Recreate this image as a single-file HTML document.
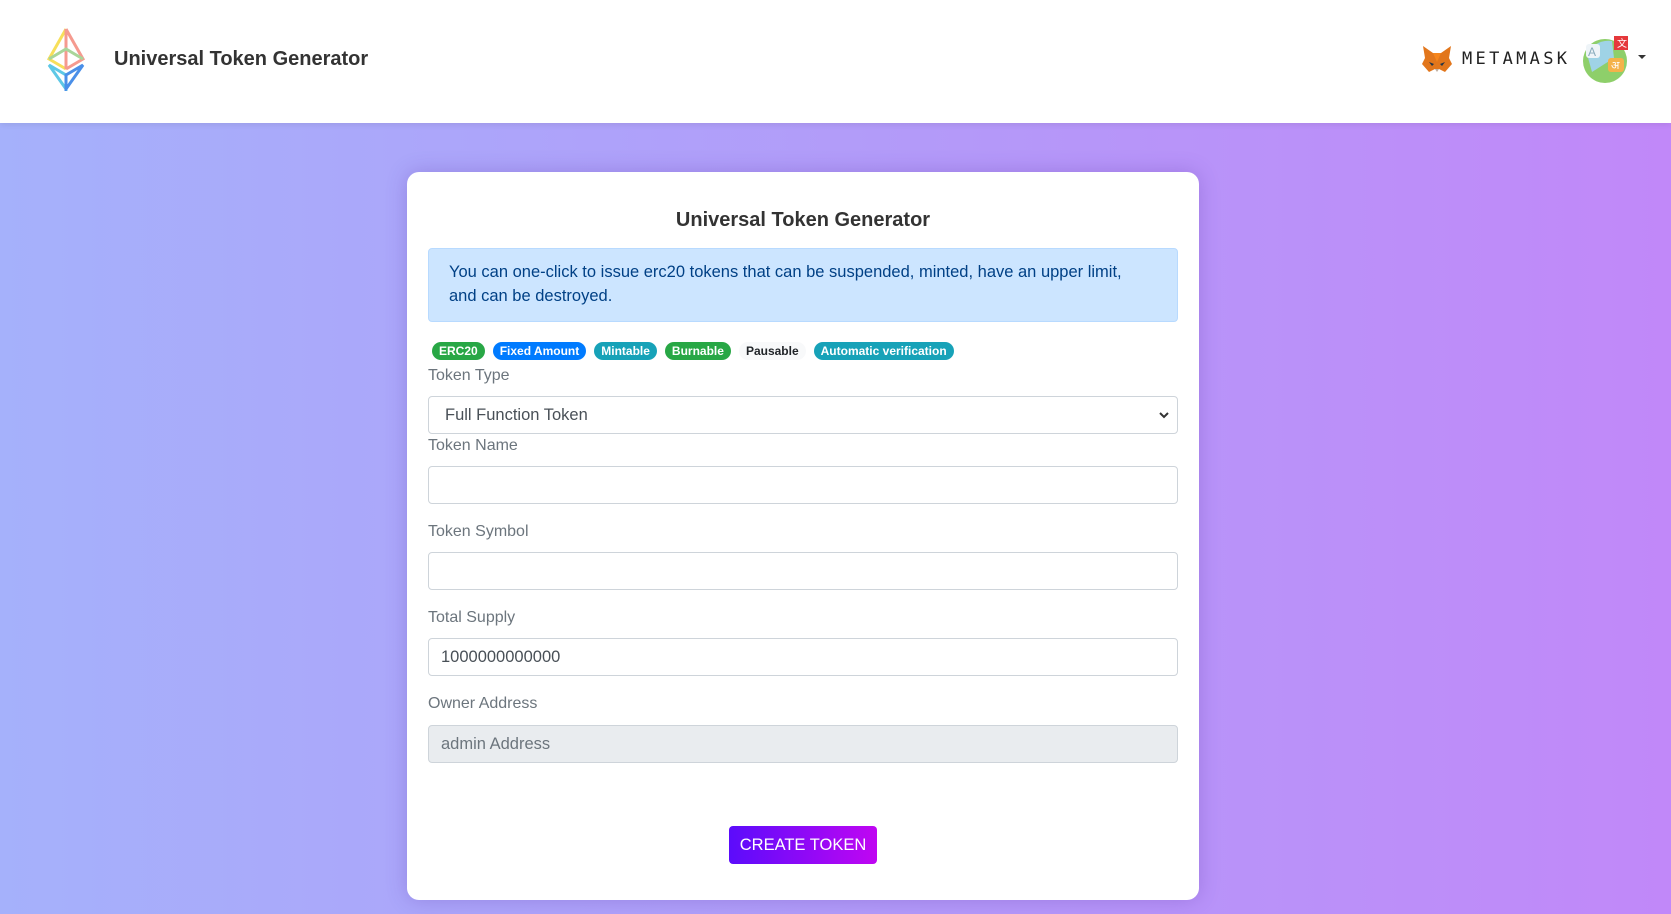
<!DOCTYPE html>
<html><head><meta charset="utf-8"><style>
*{box-sizing:border-box;margin:0;padding:0}
body{width:1671px;height:914px;overflow:hidden;font-family:"Liberation Sans",sans-serif;background:linear-gradient(90deg,#a5b1fb 0%,#b39af9 55%,#c188f9 100%);position:relative;color:#333}
.hdr{position:absolute;left:0;top:0;width:1671px;height:123px;background:#fff;box-shadow:0 2px 6px rgba(0,0,0,.08)}
.logo{position:absolute;left:46px;top:27px}
.title{position:absolute;left:114px;top:48px;font-size:20px;font-weight:bold;color:#333}
.mm{position:absolute;left:1462px;top:49px;font-size:17px;letter-spacing:3.3px;color:#222;font-family:"DejaVu Sans Mono",monospace}
.card{position:absolute;left:407px;top:172px;width:792px;height:728px;background:#fff;border-radius:12px;box-shadow:0 0 20px rgba(80,40,160,.25)}
.ct{position:absolute;left:0;width:100%;top:37px;text-align:center;font-size:20px;font-weight:bold;color:#333}
.alert{position:absolute;left:21px;top:76px;width:750px;height:74px;background:#cce5ff;border:1px solid #b8daff;border-radius:4px;color:#004085;font-size:16.5px;line-height:24px;padding:11px 46px 11px 20px}
.badges{position:absolute;left:25px;top:170px;display:flex;gap:8px}
.b{font-size:12px;font-weight:bold;color:#fff;border-radius:10px;height:18px;line-height:18px;padding:0 7px}
.lbl{position:absolute;left:21px;font-size:16px;color:#6c757d}
.inp{position:absolute;left:21px;width:750px;height:38px;border:1px solid #ced4da;border-radius:4px;font-size:16.5px;color:#495057;padding:0 12px;line-height:36px;background:#fff}
.btn{position:absolute;left:322px;top:654px;width:148px;height:38px;border-radius:4px;background:linear-gradient(90deg,#5b0cfb,#c006f2);color:#fff;font-size:16.5px;text-align:center;line-height:38px}
</style></head><body>
<div class="hdr">
<svg class="logo" width="40" height="64" viewBox="0 0 40 64" fill="none" stroke-width="3">
<path d="M20 2 L3 32 L20 42" stroke="#f7df5a"/><path d="M20 2 L37 32 L20 42" stroke="#f59a8f"/><path d="M20 2 L20 42" stroke="#f59a8f"/>
<path d="M3 32 L20 22 L37 32" stroke="#a9d59a"/>
<path d="M3 38 L20 62 L20 48 Z" stroke="#5ec8e6"/><path d="M37 38 L20 62 L20 48 Z" stroke="#4a8fe8"/>
</svg>
<div class="title">Universal Token Generator</div>
<svg style="position:absolute;left:1421px;top:44px" width="32" height="30" viewBox="0 0 32 30"><path d="M2 2 L12 9 L20 9 L30 2 L28 14 L31 20 L24 28 L18 25 L14 25 L8 28 L1 20 L4 14 Z" fill="#e2761b"/><path d="M12 9 L16 18 L20 9 Z" fill="#f6851b"/><path d="M8 18 L13 20 L11 22 Z M24 18 L19 20 L21 22Z" fill="#233447"/><path d="M14 25 L16 28 L18 25Z" fill="#c0ad9e"/></svg>
<div class="mm">METAMASK</div>
<svg style="position:absolute;left:1582px;top:34px" width="48" height="50" viewBox="0 0 48 50"><circle cx="23" cy="27" r="22" fill="#8ecf6a"/><path d="M5 20 Q14 5 30 7 L32 24 L10 38 Z" fill="#9fd3e6"/><rect x="4" y="10" width="14" height="14" rx="3" fill="#eef4f8"/><text x="6" y="22" font-size="12" fill="#8ab" font-family="Liberation Sans">A</text><rect x="26" y="24" width="16" height="14" rx="3" fill="#f4b24a"/><text x="29" y="35" font-size="11" fill="#fff">अ</text><rect x="32" y="2" width="14" height="14" fill="#e5383b"/><text x="35" y="13" font-size="10" fill="#fff">文</text></svg>
<div style="position:absolute;left:1638px;top:55px;border-left:4px solid transparent;border-right:4px solid transparent;border-top:4px solid #333"></div>
</div>
<div class="card">
<div class="ct">Universal Token Generator</div>
<div class="alert">You can one-click to issue erc20 tokens that can be suspended, minted, have an upper limit, and can be destroyed.</div>
<div class="badges">
<span class="b" style="background:#28a745">ERC20</span>
<span class="b" style="background:#007bff">Fixed Amount</span>
<span class="b" style="background:#17a2b8">Mintable</span>
<span class="b" style="background:#28a745">Burnable</span>
<span class="b" style="background:#f8f9fa;color:#212529">Pausable</span>
<span class="b" style="background:#17a2b8">Automatic verification</span>
</div>
<div class="lbl" style="top:195px">Token Type</div>
<div class="inp" style="top:224px;padding-left:16px">Full Function Token<svg style="position:absolute;right:8px;top:14px" width="10" height="8" viewBox="0 0 10 8"><path d="M1 2 L5 6 L9 2" stroke="#333" stroke-width="2" fill="none"/></svg></div>
<div class="lbl" style="top:265px">Token Name</div>
<div class="inp" style="top:294px"></div>
<div class="lbl" style="top:351px">Token Symbol</div>
<div class="inp" style="top:380px"></div>
<div class="lbl" style="top:437px">Total Supply</div>
<div class="inp" style="top:466px">1000000000000</div>
<div class="lbl" style="top:523px">Owner Address</div>
<div class="inp" style="top:553px;background:#e9ecef;color:#6c757d">admin Address</div>
<div class="btn">CREATE TOKEN</div>
</div>
</body></html>
